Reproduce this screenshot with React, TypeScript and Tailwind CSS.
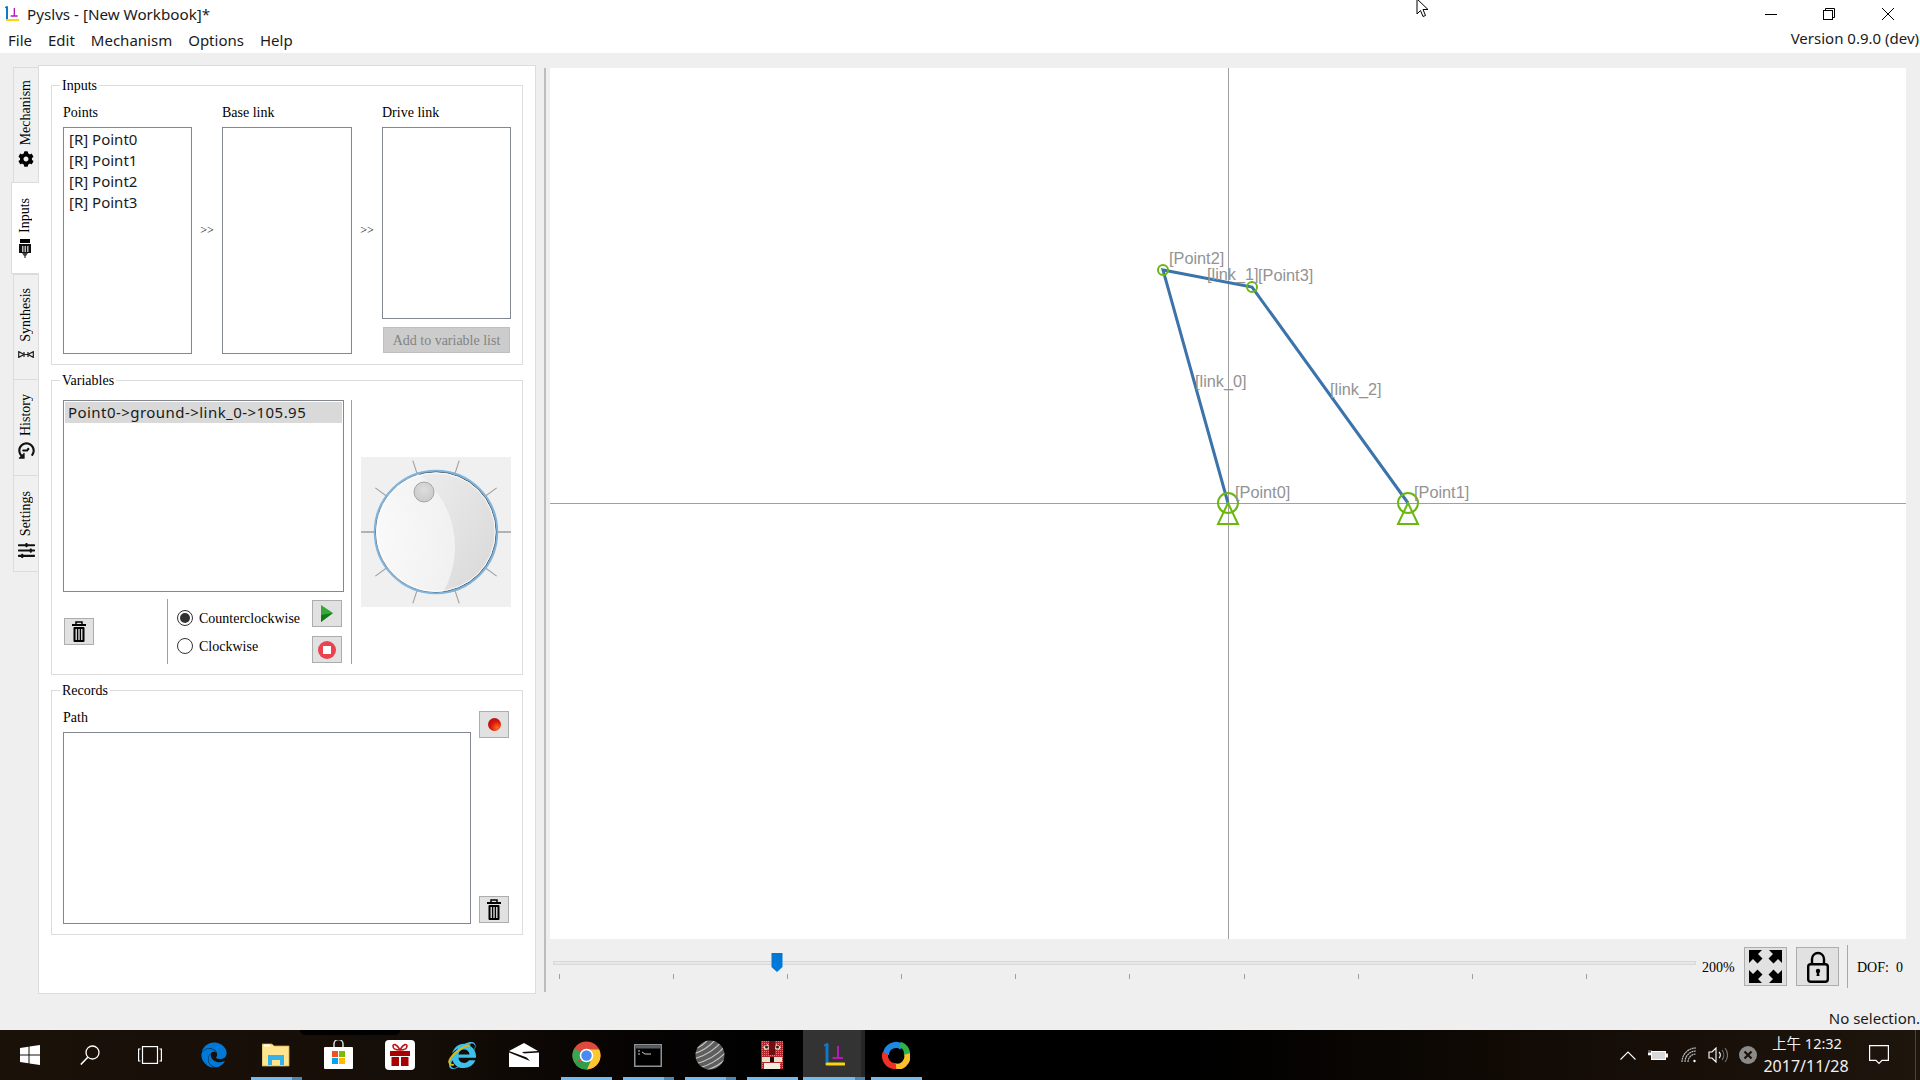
import type { ReactNode } from "react"
import { FaCog, FaEdge, FaHistory, FaInternetExplorer, FaSlidersH } from "react-icons/fa"

const uiFont = "font-['Noto_Sans',sans-serif]"
const serifFont = "font-['Liberation_Serif',serif]"

function TitleIcon({ size = 16 }: { size?: number }) {
  return (
    <svg width={size} height={size} viewBox="0 0 24 24" fill="none">
      <path d="M6 1.5V20" stroke="#1178c8" strokeWidth="3" strokeLinecap="round" />
      <path d="M3 2.5 6 1.5" stroke="#1178c8" strokeWidth="2" />
      <path d="M17 3v12M11.5 15H22" stroke="#b01cb4" strokeWidth="2" />
      <path d="M6 21h17" stroke="#fbd40c" strokeWidth="3" strokeLinecap="round" />
    </svg>
  )
}

function Trash() {
  return (
    <svg width="14" height="21" viewBox="0 0 14 21">
      <path d="M4 3V1h6v2" fill="none" stroke="#000" strokeWidth="1.5" />
      <rect x="0" y="3" width="14" height="2" fill="#000" />
      <rect x="1.5" y="6" width="11" height="15" rx="1" fill="#000" />
      <rect x="3.5" y="8" width="1.5" height="11" fill="#ccc" />
      <rect x="6.25" y="8" width="1.5" height="11" fill="#ccc" />
      <rect x="9" y="8" width="1.5" height="11" fill="#ccc" />
    </svg>
  )
}

function SquareButton({ children, className = "" }: { children: ReactNode; className?: string }) {
  return (
    <div className={`w-[30px] h-[27px] bg-[#e1e1e1] border border-[#adadad] flex items-center justify-center ${className}`}>
      {children}
    </div>
  )
}

function ListBox({ className = "", children }: { className?: string; children?: ReactNode }) {
  return <div className={`bg-white border border-[#828790] ${className}`}>{children}</div>
}

function Group({ title, className, children }: { title: string; className: string; children: ReactNode }) {
  return (
    <div className={`relative border border-[#dcdcdc] ${className}`}>
      <span className={`absolute left-[8px] -top-[9px] bg-white px-[2px] h-[18px] leading-[18px] text-[14px] text-black ${serifFont}`}>
        {title}
      </span>
      {children}
    </div>
  )
}

function SideTab({ label, icon, active, className }: { label: string; icon: ReactNode; active?: boolean; className: string }) {
  return (
    <div
      className={`flex flex-col items-center justify-start gap-[6px] border-l border-t border-[#dcdcdc] ${
        active ? "w-[28px] -mr-px bg-white relative z-10 border-b" : "w-[25px] bg-[#f0f0f0]"
      } ${className}`}
    >
      <span className={`[writing-mode:vertical-rl] rotate-180 text-[14px] leading-[16px] text-black ${serifFont}`}>{label}</span>
      {icon}
    </div>
  )
}

function SideTabs() {
  return (
    <div className="w-[27px] pt-[2px] flex flex-col items-end">
      <SideTab label="Mechanism" icon={<FaCog size={16} color="#000" />} className="h-[115px] pt-[12px]" />
      <SideTab
        active
        label="Inputs"
        className="h-[92px] pt-[15px] pr-[2px]"
        icon={
          <svg width="12" height="19" viewBox="0 0 12 19">
            <rect x="1" y="0" width="10" height="4" fill="#000" />
            <rect x="0" y="5" width="12" height="9" fill="#111" />
            <rect x="3" y="7" width="1.5" height="6" fill="#bbb" />
            <rect x="5.5" y="7" width="1.5" height="6" fill="#bbb" />
            <rect x="8" y="7" width="1.5" height="6" fill="#bbb" />
            <path d="M3 14h6l-2 3H5z" fill="#444" />
            <rect x="5.4" y="17" width="1.2" height="2" fill="#333" />
          </svg>
        }
      />
      <SideTab
        label="Synthesis"
        className="h-[105px] pt-[13px]"
        icon={
          <svg width="16" height="7" viewBox="0 0 16 7" fill="none" stroke="#222" strokeWidth="1.2" className="mt-[3px]">
            <path d="M0.700 0.600v5.800L6 3.500zM15.300 0.600v5.800L10 3.500z" />
            <path d="M6 1v5M10 1v5M6 3.500h4" />
          </svg>
        }
      />
      <SideTab label="History" icon={<FaHistory size={17} color="#111" className="-rotate-90" />} className="h-[96px] pt-[14px]" />
      <SideTab label="Settings" icon={<FaSlidersH size={17} color="#111" />} className="h-[97px] pt-[15px] border-b" />
    </div>
  )
}

function InputsGroup() {
  return (
    <Group title="Inputs" className="h-[280px] pt-[18px] pl-[11px] flex">
      <div className="w-[129px] flex flex-col">
        <span className={`h-[18px] mb-[5px] leading-[18px] text-[14px] text-black ${serifFont}`}>Points</span>
        <ListBox className="h-[227px] pt-[1px] pl-[5px]">
          {["[R] Point0", "[R] Point1", "[R] Point2", "[R] Point3"].map((p) => (
            <div key={p} className={`h-[21px] leading-[21px] text-[15px] text-[#1a1a1a] ${uiFont}`}>
              {p}
            </div>
          ))}
        </ListBox>
      </div>
      <div className={`w-[30px] mt-[117px] h-[18px] leading-[18px] text-center text-[12px] text-black ${serifFont}`}>&gt;&gt;</div>
      <div className="w-[130px] flex flex-col">
        <span className={`h-[18px] mb-[5px] leading-[18px] text-[14px] text-black ${serifFont}`}>Base link</span>
        <ListBox className="h-[227px]" />
      </div>
      <div className={`w-[30px] mt-[117px] h-[18px] leading-[18px] text-center text-[12px] text-black ${serifFont}`}>&gt;&gt;</div>
      <div className="w-[129px] flex flex-col">
        <span className={`h-[18px] mb-[5px] leading-[18px] text-[14px] text-black ${serifFont}`}>Drive link</span>
        <ListBox className="h-[192px]" />
        <div className={`mt-[8px] mx-[1px] h-[26px] pt-[1px] bg-[#cccccc] border border-[#bfbfbf] flex items-center justify-center text-[14px] text-[#838383] ${serifFont}`}>
          Add to variable list
        </div>
      </div>
    </Group>
  )
}

function Dial() {
  const ticks = [0, 36, 72, 108, 144, 180, 216, 252, 288, 324]
  return (
    <svg width="150" height="150" viewBox="0 0 150 150" className="bg-[#f0f0f0]">
      <defs>
        <linearGradient id="dialBase" x1="0.2" y1="0.1" x2="1" y2="0.6">
          <stop offset="0" stopColor="#eeeeee" />
          <stop offset="1" stopColor="#dcdcdc" />
        </linearGradient>
        <radialGradient id="dialLight" cx="0.3" cy="0.45" r="0.75">
          <stop offset="0" stopColor="#ffffff" />
          <stop offset="1" stopColor="#f0f0f0" />
        </radialGradient>
        <radialGradient id="dialKnob" cx="0.5" cy="0.4" r="0.6">
          <stop offset="0" stopColor="#dedede" />
          <stop offset="1" stopColor="#c9c9c9" />
        </radialGradient>
        <clipPath id="dialClip">
          <circle cx="75" cy="75" r="60" />
        </clipPath>
      </defs>
      {ticks.map((a) => {
        const r = (a * Math.PI) / 180
        return (
          <line
            key={a}
            x1={75 + 60 * Math.cos(r)}
            y1={75 + 60 * Math.sin(r)}
            x2={75 + 75 * Math.cos(r)}
            y2={75 + 75 * Math.sin(r)}
            stroke={a % 180 === 0 ? "#808080" : "#a0a0a0"}
            strokeWidth="1.1"
          />
        )
      })}
      <circle cx="75" cy="75" r="61" fill="#fff" stroke="#82b3da" strokeWidth="2.5" />
      <circle cx="75" cy="75" r="60" fill="url(#dialBase)" stroke="#3f5a70" strokeWidth="1" />
      <circle cx="2" cy="90" r="92" fill="url(#dialLight)" clipPath="url(#dialClip)" />
      <circle cx="75" cy="75" r="59.200" fill="none" stroke="#fff" strokeWidth="1" />
      <circle cx="63" cy="35" r="10" fill="url(#dialKnob)" stroke="#a6a6a6" />
    </svg>
  )
}

function VariablesGroup() {
  return (
    <Group title="Variables" className="h-[295px] pt-[19px] pl-[11px] flex">
      <div className="w-[281px] flex flex-col">
        <ListBox className="h-[192px] p-[1px]">
          <div className={`h-[21px] leading-[21px] pl-[3px] bg-[#d9d9d9] text-[15px] tracking-[0.45px] text-[#1a1a1a] ${uiFont}`}>
            Point0-&gt;ground-&gt;link_0-&gt;105.95
          </div>
        </ListBox>
        <div className="mt-[7px] h-[65px] flex items-center">
          <div className="w-[104px] pl-[1px]">
            <SquareButton>
              <Trash />
            </SquareButton>
          </div>
          <div className="h-full border-l border-[#a0a0a0] pl-[9px] w-[145px] flex flex-col justify-center gap-[8px]">
            <div className="h-[20px] flex items-center gap-[6px]">
              <span className="w-[16px] h-[16px] rounded-full border border-[#333] flex items-center justify-center">
                <span className="w-[10px] h-[10px] rounded-full bg-[#333]" />
              </span>
              <span className={`pt-[1px] text-[14px] text-black ${serifFont}`}>Counterclockwise</span>
            </div>
            <div className="h-[20px] flex items-center gap-[6px]">
              <span className="w-[16px] h-[16px] rounded-full border border-[#333] bg-white" />
              <span className={`pt-[1px] text-[14px] text-black ${serifFont}`}>Clockwise</span>
            </div>
          </div>
          <div className="flex flex-col gap-[9px]">
            <SquareButton>
              <svg width="14" height="17" viewBox="0 0 14 17">
                <path d="M1 0 13 8 1 17z" fill="#35a93a" />
                <path d="M1 10 13 8 1 17z" fill="#147a1c" />
              </svg>
            </SquareButton>
            <SquareButton>
              <svg width="18" height="18" viewBox="0 0 18 18">
                <circle cx="9" cy="9" r="9" fill="#e8434f" />
                <rect x="5" y="5" width="8" height="8" fill="#fff" />
              </svg>
            </SquareButton>
          </div>
        </div>
      </div>
      <div className="ml-[7px] h-[264px] border-l border-[#a0a0a0] pl-[9px] flex items-center">
        <Dial />
      </div>
    </Group>
  )
}

function RecordsGroup() {
  return (
    <Group title="Records" className="h-[245px] pt-[18px] pl-[11px] flex">
      <div className="w-[408px] flex flex-col">
        <span className={`h-[18px] mb-[5px] leading-[18px] text-[14px] text-black ${serifFont}`}>Path</span>
        <ListBox className="h-[192px]" />
      </div>
      <div className="ml-[8px] h-[215px] pt-[2px] pb-[1px] flex flex-col justify-between">
        <SquareButton>
          <svg width="13" height="13" viewBox="0 0 13 13">
            <defs>
              <radialGradient id="recBall" cx="0.7" cy="0.75" r="0.8">
                <stop offset="0" stopColor="#f8701c" />
                <stop offset="0.6" stopColor="#d8170e" />
                <stop offset="1" stopColor="#b80f10" />
              </radialGradient>
            </defs>
            <circle cx="6.500" cy="6.500" r="6.500" fill="url(#recBall)" />
          </svg>
        </SquareButton>
        <SquareButton>
          <Trash />
        </SquareButton>
      </div>
    </Group>
  )
}

function Canvas() {
  const labels = [
    { t: "[Point2]", x: 619, y: 196 },
    { t: "[link_1]", x: 657, y: 212 },
    { t: "[Point3]", x: 708, y: 213 },
    { t: "[link_0]", x: 645, y: 319 },
    { t: "[link_2]", x: 780, y: 327 },
    { t: "[Point0]", x: 685, y: 430 },
    { t: "[Point1]", x: 864, y: 430 },
  ]
  return (
    <svg width="1356" height="871" viewBox="0 0 1356 871" className="bg-white block">
      <line x1="678.500" y1="0" x2="678.500" y2="871" stroke="#a0a0a0" />
      <line x1="0" y1="435.500" x2="1356" y2="435.500" stroke="#a0a0a0" />
      <g stroke="#3b73ab" strokeWidth="3" fill="none">
        <path d="M678 435 613 202 702 219 858 435" />
      </g>
      <g stroke="#6ab70d" strokeWidth="2" fill="none">
        <circle cx="678" cy="435" r="10" />
        <path d="M678 435 668 456H688z" />
        <circle cx="858" cy="435" r="10" />
        <path d="M858 435 848 456H868z" />
        <circle cx="613" cy="202" r="5" />
        <circle cx="702" cy="219" r="5" />
      </g>
      {labels.map((l) => (
        <text key={l.t} x={l.x} y={l.y} fontSize="16.300" fill="#939393" fontFamily="Liberation Sans, sans-serif">
          {l.t}
        </text>
      ))}
    </svg>
  )
}

function BottomBar() {
  const ticks = Array.from({ length: 10 }, (_, i) => i)
  return (
    <div className="mt-[6px] h-[43px] flex items-center">
      <div className="ml-[3px] w-[1143px] h-full relative">
        <div className="absolute left-0 right-0 top-[16px] h-[4px] bg-[#e8e8e8] border border-[#d6d9d9]" />
        <svg width="12" height="19" viewBox="0 0 12 19" className="absolute left-[218px] top-[8px]">
          <path d="M0.500 0h11v14L6 19 0.500 14z" fill="#0078d7" />
        </svg>
        <div className="absolute left-[6px] top-[29px] flex gap-[113.100px]">
          {ticks.map((t) => (
            <span key={t} className="w-px h-[5px] bg-[#a0a0a0]" />
          ))}
        </div>
      </div>
      <span className={`ml-[6px] w-[42px] pt-[1px] text-[14px] text-black ${serifFont}`}>200%</span>
      <div className="w-[43px] h-[39px] bg-[#e1e1e1] border border-[#adadad] flex items-center justify-center">
        <svg width="33" height="33" viewBox="0 0 33 33" fill="#000">
          <path d="M0 0h13L9 4l4.500 4.500-5 5L4 9l-4 4z" />
          <path d="M33 0H20l4 4-4.500 4.500 5 5L29 9l4 4z" />
          <path d="M0 33H13L9 29l4.500-4.500-5-5L4 24l-4-4z" />
          <path d="M33 33H20l4-4-4.500-4.500 5-5L29 24l4-4z" />
        </svg>
      </div>
      <div className="ml-[9px] w-[43px] h-[39px] bg-[#e1e1e1] border border-[#adadad] flex items-center justify-center">
        <svg width="22" height="32" viewBox="0 0 22 32" fill="none">
          <path d="M5 14V8a6 6 0 0 1 12 0v6" stroke="#000" strokeWidth="2.400" />
          <rect x="1.200" y="13.200" width="19.600" height="17.600" rx="2.500" stroke="#000" strokeWidth="2.400" />
          <circle cx="11" cy="20" r="2.200" fill="#000" />
          <path d="M10 21h2l.5 4h-3z" fill="#000" />
        </svg>
      </div>
      <div className="ml-[8px] h-full border-l border-[#a8a8a8] pl-[9px] flex items-center">
        <span className={`pt-[1px] text-[14px] whitespace-pre text-black ${serifFont}`}>DOF:  0</span>
      </div>
    </div>
  )
}

function TaskSlot({ children, running, multi, active }: { children: ReactNode; running?: boolean; multi?: boolean; active?: boolean }) {
  return (
    <div className={`relative w-[62px] h-full flex items-center justify-center ${active ? "bg-[#333333] pr-[3px]" : ""}`}>
      {children}
      {running && (
        <div className={`absolute bottom-0 h-[3px] flex ${active ? "left-0 right-0" : "left-[6px] right-[5px]"}`}>
          <span className="flex-1 bg-[#76b9ed]" />
          {multi && <span className="w-[10px] bg-[#4f86b0]" />}
        </div>
      )}
      {active && <span className="absolute right-0 top-0 bottom-[3px] w-[4px] bg-[#262626]" />}
    </div>
  )
}

function WinLogo() {
  return (
    <svg width="20" height="20" viewBox="0 0 20 20" fill="#fff">
      <path d="M0 3 8.500 1.800V9.500H0zM9.500 1.600 20 0V9.500H9.500zM0 10.500H8.500V18.200L0 17zM9.500 10.500H20V20L9.500 18.400z" />
    </svg>
  )
}

function ChromeLogo() {
  return (
    <svg width="29" height="29" viewBox="0 0 29 29">
      <circle cx="14.500" cy="14.500" r="14" fill="#dd4a3c" />
      <path d="M14.500 14.500 2.400 21.500A14 14 0 0 1 2.400 7.500L8.500 11z" fill="#34a853" />
      <path d="M2.400 21.500A14 14 0 0 0 15 28.500L21 17z" fill="#2f9e4b" />
      <path d="M14.500 8.500H27.200A14 14 0 0 1 15 28.500L20 17z" fill="#fbc82d" />
      <circle cx="14.500" cy="14.500" r="6.800" fill="#fff" />
      <circle cx="14.500" cy="14.500" r="5.200" fill="#4a8af4" />
    </svg>
  )
}

function SphereLogo() {
  return (
    <svg width="30" height="30" viewBox="0 0 30 30">
      <defs>
        <clipPath id="sphereClip">
          <circle cx="15" cy="15" r="14.500" />
        </clipPath>
      </defs>
      <circle cx="15" cy="15" r="14.500" fill="#5e5e5e" />
      <g clipPath="url(#sphereClip)" stroke="#c4c4c4" strokeWidth="1.200" fill="none">
        <path d="M-2 9Q8 7 14-2M-2 14Q12 10 22-2M-2 19Q16 15 28 0M0 24Q20 19 32 4M4 28Q22 23 34 9M9 31Q26 26 34 15M16 33Q28 28 34 21" />
      </g>
    </svg>
  )
}

function CatLogo() {
  return (
    <svg width="24" height="28" viewBox="0 0 24 28">
      <defs>
        <pattern id="catCheck" width="2" height="2" patternUnits="userSpaceOnUse">
          <rect width="2" height="2" fill="#b3262e" />
          <rect width="1" height="1" fill="#e0777a" />
        </pattern>
      </defs>
      <rect x="1" y="0" width="22" height="28" fill="url(#catCheck)" />
      <rect x="9" y="0" width="6" height="14" fill="#6d1015" />
      <path d="M3 6l5-3 1 5-4 1zM21 6l-5-3-1 5 4 1z" fill="#e8e0c0" />
      <circle cx="6.500" cy="6" r="1.500" fill="#222" />
      <circle cx="17.500" cy="6" r="1.500" fill="#222" />
      <rect x="2" y="16" width="8" height="5" fill="#e6e3c8" />
      <rect x="14" y="16" width="8" height="5" fill="#e6e3c8" />
      <rect x="10" y="16" width="4" height="5" fill="#111" />
      <rect x="4" y="22" width="16" height="6" fill="#f1eee0" />
    </svg>
  )
}

function ShutterLogo() {
  return (
    <svg width="28" height="28" viewBox="0 0 28 28" fill="none" strokeWidth="6">
      <path d="M4 14A10 10 0 0 1 20 6" stroke="#1e88e5" />
      <path d="M18 3.500A10 10 0 0 1 25 14" stroke="#2db34a" />
      <path d="M25 13A10 10 0 0 1 12 25" stroke="#fbc02d" />
      <path d="M14 25A10 10 0 0 1 3.500 12" stroke="#ee3124" />
      <circle cx="14" cy="14" r="5.500" stroke="#000" strokeWidth="2" />
    </svg>
  )
}

function Taskbar() {
  return (
    <div className="relative h-[50px] flex text-white bg-[linear-gradient(90deg,#1a1109_0%,#150d07_22%,#070403_32%,#000000_42%,#000000_62%,#140c06_82%,#1e150d_100%)]">
      <div className="absolute left-[300px] top-0 w-[100px] h-[5px] bg-black rounded-b-full" />
      <div className="w-[60px] flex items-center justify-center">
        <WinLogo />
      </div>
      <div className="w-[60px] flex items-center justify-center">
        <svg width="20" height="20" viewBox="0 0 20 20" fill="none" stroke="#fff" strokeWidth="1.300">
          <circle cx="12.500" cy="7.500" r="6.500" />
          <path d="M7.800 12.200 0.800 19.500" strokeWidth="1.600" />
        </svg>
      </div>
      <div className="w-[60px] flex items-center justify-center">
        <svg width="24" height="18" viewBox="0 0 24 18" fill="none" stroke="#fff" strokeWidth="1.200">
          <rect x="4.500" y="0.600" width="15" height="16.800" />
          <path d="M2.500 3H0.600V15H2.500M21.500 3H23.400V15H21.500" />
        </svg>
      </div>
      <div className="w-[3px]" />
      <TaskSlot>
        <FaEdge size={26} color="#0078d7" />
      </TaskSlot>
      <TaskSlot running multi>
        <svg width="28" height="24" viewBox="0 0 28 24">
          <path d="M0 1h10l2 2h15v20H0z" fill="#ffe58f" stroke="#c9a84c" strokeWidth="0.800" />
          <rect x="2" y="1.500" width="6" height="2" fill="#fff" />
          <path d="M6 22V12h16v10h-4v-5H10v5z" fill="#35b3e8" />
        </svg>
      </TaskSlot>
      <TaskSlot>
        <svg width="29" height="30" viewBox="0 0 29 30">
          <path d="M10 8V4a4.500 4.500 0 0 1 9 0v4" fill="none" stroke="#ddd" strokeWidth="1.500" />
          <rect x="0" y="7" width="29" height="22" rx="1" fill="#fff" />
          <rect x="8" y="11" width="6" height="6" fill="#f25022" />
          <rect x="15" y="11" width="6" height="6" fill="#7fba00" />
          <rect x="8" y="18" width="6" height="6" fill="#00a4ef" />
          <rect x="15" y="18" width="6" height="6" fill="#ffb900" />
        </svg>
      </TaskSlot>
      <TaskSlot>
        <svg width="30" height="30" viewBox="0 0 30 30">
          <rect width="30" height="30" rx="4" fill="#fff" />
          <rect x="5" y="11" width="20" height="5" fill="#a80000" />
          <rect x="6.500" y="17" width="7.500" height="9" fill="#a80000" />
          <rect x="16" y="17" width="7.500" height="9" fill="#a80000" />
          <path d="M15 10C10 10 8 8 8 6s3-3 7 4c4-7 7-6 7-4s-2 4-7 4z" fill="none" stroke="#c01818" strokeWidth="1.600" />
        </svg>
      </TaskSlot>
      <TaskSlot>
        <span className="relative flex items-center justify-center">
          <FaInternetExplorer size={27} color="#3cc0ec" />
          <span className="absolute w-[32px] h-[14px] rounded-[50%] border-2 border-[#e3b612] border-b-transparent border-r-transparent -rotate-[35deg]" />
        </span>
      </TaskSlot>
      <TaskSlot>
        <svg width="30" height="24" viewBox="0 0 30 24" fill="#fff">
          <path d="M15 0 29 8 13 9 22 16 0 8z" />
          <path d="M0 9.500 21 18 14 10.500 30 9.500V24H0z" />
        </svg>
      </TaskSlot>
      <TaskSlot running>
        <ChromeLogo />
      </TaskSlot>
      <TaskSlot running multi>
        <svg width="28" height="23" viewBox="0 0 28 23">
          <rect x="0.750" y="0.750" width="26.500" height="21.500" fill="#000" stroke="#8d9299" strokeWidth="1.500" />
          <rect x="1.500" y="1.500" width="25" height="3" fill="#5a5f66" />
          <path d="M4 7h2M4 10h2M8 8l3 2h6" stroke="#ccc" strokeWidth="1" fill="none" />
        </svg>
      </TaskSlot>
      <TaskSlot running multi>
        <SphereLogo />
      </TaskSlot>
      <TaskSlot running>
        <CatLogo />
      </TaskSlot>
      <TaskSlot running multi active>
        <TitleIcon size={24} />
      </TaskSlot>
      <TaskSlot running>
        <ShutterLogo />
      </TaskSlot>
      <div className="ml-auto flex items-center">
        <svg width="16" height="9" viewBox="0 0 16 9" fill="none" stroke="#fff" strokeWidth="1.100">
          <path d="M0.500 8.500 8 1l7.500 7.500" />
        </svg>
        <svg width="20" height="12" viewBox="0 0 20 12" className="ml-[12px]">
          <path d="M1 1v3M3 1v3M0 4h4v2H0z" stroke="#fff" strokeWidth="0.600" fill="#fff" />
          <rect x="3.500" y="2.500" width="14" height="8" fill="#d8d8d8" stroke="#fff" />
          <rect x="18" y="4.500" width="2" height="4" fill="#f4f4f4" />
        </svg>
        <svg width="16" height="16" viewBox="0 0 16 16" fill="none" stroke="#bbb" strokeWidth="1.200" className="ml-[13px]">
          <path d="M1 15A14 14 0 0 1 15 1M4 15A11 11 0 0 1 15 4M7 15A8 8 0 0 1 15 7" strokeDasharray="2 0.500" />
          <circle cx="13.500" cy="14" r="1.200" fill="#fff" stroke="none" />
        </svg>
        <svg width="20" height="16" viewBox="0 0 20 16" fill="none" stroke="#fff" strokeWidth="1.100" className="ml-[11px]">
          <path d="M1 5h3l4-4v14l-4-4H1z" />
          <path d="M11 5a4 4 0 0 1 0 6" />
          <path d="M14 3a8 8 0 0 1 0 10M17 1a11 11 0 0 1 0 14" stroke="#777" />
        </svg>
        <svg width="18" height="18" viewBox="0 0 18 18" className="ml-[11px]">
          <circle cx="9" cy="9" r="9" fill="#8a8a8a" />
          <path d="M5.500 5.500l7 7M12.500 5.500l-7 7" stroke="#1a1008" strokeWidth="2.200" />
        </svg>
        <div className="w-[94px] ml-[1px] flex flex-col items-center leading-[23px] text-[#f0f0f0] font-['Noto_Sans','Noto_Sans_CJK_TC',sans-serif]">
          <span className="text-[14.500px] pl-[4px]">上午 12:32</span>
          <span className="text-[16px] pl-[2px]">2017/11/28</span>
        </div>
        <svg width="20" height="20" viewBox="0 0 20 20" fill="none" stroke="#fff" strokeWidth="1.200" className="ml-[17px]">
          <path d="M0.600 0.600H19.400V15.400H13L10 18.500 7 15.400H0.600z" />
        </svg>
        <div className="ml-[26px] h-full w-px bg-[#4a4540]" />
        <div className="w-[4px]" />
      </div>
    </div>
  )
}

export default function App() {
  return (
    <div className="w-[1920px] h-[1080px] overflow-hidden flex flex-col bg-[#efefef]">
      <div className="h-[27px] bg-white flex items-center pl-[3px] pr-0 relative">
        <TitleIcon />
        <span className={`ml-[8px] pt-[1px] text-[15.200px] text-[#1a1a1a] ${uiFont}`}>Pyslvs - [New Workbook]*</span>
        <div className="ml-auto flex items-center">
          <svg width="12" height="12" viewBox="0 0 12 12" stroke="#000" fill="none">
            <path d="M0 6.500H12" />
          </svg>
          <svg width="12" height="12" viewBox="0 0 12 12" stroke="#000" fill="none" className="ml-[46px]">
            <path d="M2.500 2.500V0.500H11.500V9.500H9.500" />
            <rect x="0.500" y="2.500" width="9" height="9" />
          </svg>
          <svg width="12" height="12" viewBox="0 0 12 12" stroke="#000" fill="none" className="ml-[47px] mr-[26px]">
            <path d="M0 0 12 12M12 0 0 12" />
          </svg>
        </div>
        <svg width="13" height="20" viewBox="0 0 13 20" className="absolute left-[1416px] -top-[2px]">
          <path d="M1 1V16L4.500 12.500 7 18.500 9.500 17.500 7 11.500H12z" fill="#fff" stroke="#000" strokeWidth="1" />
        </svg>
      </div>
      <div className={`h-[26px] bg-white flex items-center justify-between pl-[8px] pt-[1px] text-[15px] text-[#1a1a1a] ${uiFont}`}>
        <div className="flex gap-[16px]">
          <span>File</span>
          <span>Edit</span>
          <span>Mechanism</span>
          <span>Options</span>
          <span>Help</span>
        </div>
        <span className="pr-[1px] -mt-[5px]">Version 0.9.0 (dev)</span>
      </div>
      <div className="h-[955px] flex">
        <div className="pl-[11px] pt-[12px] flex">
          <SideTabs />
          <div className="w-[498px] h-[929px] bg-white border border-[#dcdcdc] pl-[12px] pr-[12px] pt-[19px] flex flex-col gap-[15px]">
            <InputsGroup />
            <VariablesGroup />
            <RecordsGroup />
          </div>
        </div>
        <div className="ml-[8px] mt-[15px] h-[924px] w-[2px] bg-[#bdbdbd]" />
        <div className="ml-[4px] pt-[15px] w-[1356px] flex flex-col">
          <Canvas />
          <BottomBar />
        </div>
      </div>
      <div className={`h-[22px] pb-[2px] flex items-center justify-end text-[15px] text-[#1a1a1a] ${uiFont}`}>No selection.</div>
      <Taskbar />
    </div>
  )
}
